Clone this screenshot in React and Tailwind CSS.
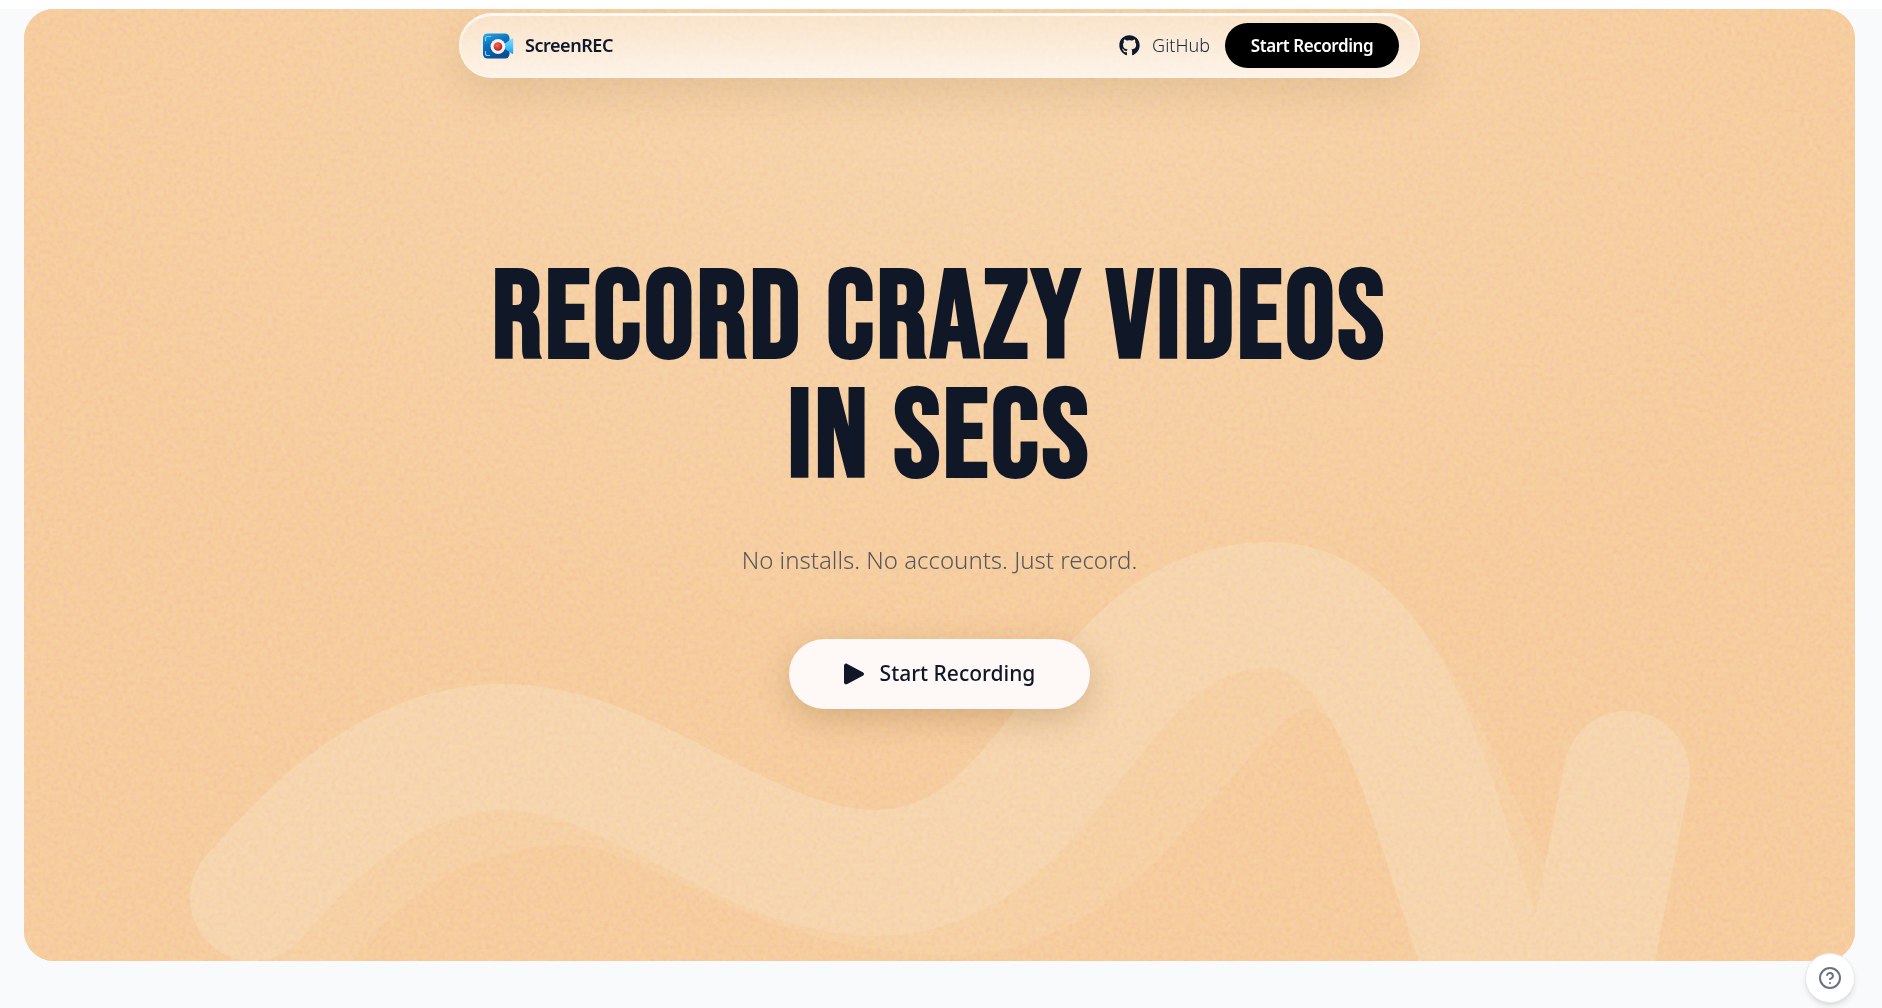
import React from 'react';
import { CircleHelp } from 'lucide-react';
import { FaGithub } from 'react-icons/fa';

const LogoIcon = () => (
  <svg viewBox="0 0 32 28" className="h-7 w-8" aria-hidden="true">
    <defs>
      <linearGradient id="logo-body" x1="0" y1="0" x2="0.4" y2="1">
        <stop offset="0" stopColor="#35a8e6" />
        <stop offset="0.45" stopColor="#0b74be" />
        <stop offset="1" stopColor="#0a4f93" />
      </linearGradient>
      <linearGradient id="logo-lens" x1="0" y1="0" x2="0" y2="1">
        <stop offset="0" stopColor="#7fe0ff" />
        <stop offset="1" stopColor="#1aa5f0" />
      </linearGradient>
      <radialGradient id="logo-dot" cx="0.4" cy="0.35" r="0.7">
        <stop offset="0" stopColor="#ff6a4a" />
        <stop offset="1" stopColor="#b81414" />
      </radialGradient>
    </defs>
    <rect x="1" y="1.5" width="26.500" height="25" rx="4.500" fill="url(#logo-body)" />
    <path d="M23 11.500 30 6.500a.7.7 0 0 1 1.200.6v14a.7.7 0 0 1-1.200.6L23 17z" fill="url(#logo-lens)" />
    <path d="M3.500 9V6.500a2 2 0 0 1 2-2H9M3.500 19V21.500a2 2 0 0 0 2 2H8" fill="none" stroke="#6fd0fa" strokeWidth="1.200" />
    <circle cx="16" cy="15" r="7.800" fill="#0a4479" opacity="0.5" />
    <circle cx="16" cy="14.500" r="7.500" fill="#f3f4f8" />
    <circle cx="16" cy="14.500" r="4.300" fill="url(#logo-dot)" />
  </svg>
);

// Grainy peach backdrop with the two overlapping ribbons
const HeroBackdrop = () => (
  <svg
    viewBox="24 9 1831 952"
    preserveAspectRatio="xMidYMax slice"
    className="absolute inset-0 h-full w-full"
    aria-hidden="true"
  >
    <defs>
      <radialGradient id="glow" cx="0.5" cy="0.15" r="0.5">
        <stop offset="0" stopColor="#f6d4ab" />
        <stop offset="1" stopColor="#f6cd9f" />
      </radialGradient>
      <filter id="grain" x="0" y="0" width="100%" height="100%" colorInterpolationFilters="sRGB">
        <feTurbulence type="fractalNoise" baseFrequency="0.22" numOctaves="2" seed="4" />
        <feColorMatrix values="1.6 0 0 0 -0.3  0 1.6 0 0 -0.3  0 0 1.6 0 -0.3  0 0 0 0 1" />
      </filter>
    </defs>
    <rect x="24" y="9" width="1831" height="952" fill="url(#glow)" />
    <g fill="none" strokeWidth="126" strokeLinecap="round">
      <path
        stroke="#f6d1a5"
        d="M290 940C350 850 440 782 570 782C670 782 770 892 950 892C1130 892 1200 645 1310 645C1380 645 1420 740 1441 790L1490 894"
      />
      <path
        stroke="#f6d6af"
        d="M253 898C305 838 390 747 503 747C634 747 745 873 876 873C1061 873 1084 605 1269 605C1355 605 1402 703 1438 816C1475 930 1505 1040 1538 1040C1562 1040 1580 1010 1593 949L1627 774"
      />
    </g>
    <rect x="24" y="9" width="1831" height="952" filter="url(#grain)" className="opacity-20 mix-blend-soft-light" />
  </svg>
);

const Navbar = () => (
  <nav className="relative flex w-full max-w-[961px] items-center justify-between rounded-full border border-white/60 bg-linear-to-b from-white/40 to-white/75 py-[9px] pr-5 pl-[22px] shadow-[0_16px_40px_rgba(120,90,50,0.14),inset_0_2px_1px_rgba(255,255,255,0.8)]">
    <a href="#home" className="flex items-center gap-[11px] text-[18px] font-semibold tracking-tight text-slate-900">
      <LogoIcon />
      ScreenREC
    </a>
    <div className="flex items-center gap-[15px]">
      <a href="#github" className="flex items-center gap-3 text-[18px] font-light text-slate-800">
        <FaGithub size={21} className="text-slate-900" />
        GitHub
      </a>
      <button type="button" className="h-[45px] w-[174px] rounded-full bg-black text-[17px] font-semibold tracking-tight text-white">
        Start Recording
      </button>
    </div>
  </nav>
);

const App = () => {
  return (
    <div className="min-h-screen bg-[#f9fafc] pb-[47px] font-['Noto_Sans','Open_Sans',sans-serif]">
      <div className="h-[9px] bg-white" />
      <main className="relative mr-[27px] ml-6 flex min-h-[952px] flex-col items-center overflow-hidden rounded-[30px] bg-[#f6cd9f] pt-1">
        <HeroBackdrop />
        <Navbar />
        <section className="relative flex flex-col items-center pt-[182px] text-center">
          <h1 className="font-['Bebas_Neue','Liberation_Sans_Narrow',sans-serif] text-[124px] leading-[119px] font-bold tracking-wide text-[#101828] uppercase">
            Record crazy videos
            <br />
            in secs
          </h1>
          <p className="mt-[46px] text-[24px] leading-8 font-light text-[#56575c]">
            No installs. No accounts. Just record.
          </p>
          <button
            type="button"
            className="mt-[63px] flex h-[70px] w-[301px] items-center justify-center gap-4 rounded-full bg-[#fef9f6] text-[21px] font-medium text-[#101828] shadow-[0_10px_32px_rgba(120,80,30,0.25)]"
          >
            <svg viewBox="0 0 20 22" className="h-[22px] w-5" fill="currentColor" aria-hidden="true">
              <path d="M0 3C0 1 1.500 0 3.300.9L18.800 9.300c1.600.9 1.600 2.500 0 3.400L3.300 21C1.500 21.900 0 21 0 19z" />
            </svg>
            Start Recording
          </button>
        </section>
      </main>
      <button
        type="button"
        aria-label="Help"
        className="fixed right-[27px] bottom-[5px] flex size-[50px] items-center justify-center rounded-full border border-gray-200 bg-white text-gray-500 shadow-md"
      >
        <CircleHelp size={24} />
      </button>
    </div>
  );
};

export default App;
